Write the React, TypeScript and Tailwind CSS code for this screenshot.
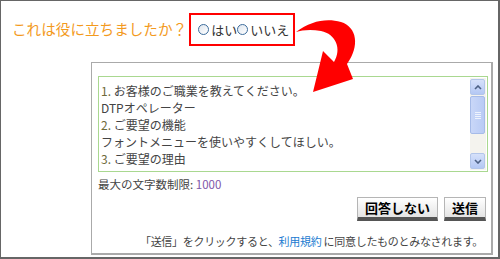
import React from "react";

const jp = { fontFamily: '"Noto Sans CJK JP", "Noto Sans", sans-serif' };

function Radio() {
  return (
    <span className="inline-block w-[11px] h-[11px] rounded-full border border-[#3c6c9c] bg-gradient-to-br from-[#dfe6ee] to-white shrink-0" />
  );
}

function Scrollbar() {
  return (
    <div className="w-[16px] h-full flex flex-col bg-[#f4f3ee] py-[1px] pr-[1px]">
      <div className="h-[16px] rounded-[2px] border border-[#b3c6ea] bg-gradient-to-b from-[#d6e1fa] to-[#b4c8f4] flex items-center justify-center">
        <svg width="8" height="5" viewBox="0 0 8 5"><path d="M1 4 L4 1 L7 4" stroke="#4d6185" strokeWidth="1.6" fill="none" /></svg>
      </div>
      <div className="mt-[1px] h-[38px] rounded-[2px] border border-[#a6bbe8] bg-gradient-to-r from-[#c9d7f8] to-[#b9cbf5] flex flex-col items-center justify-center gap-[1px]">
        <span className="block w-[6px] h-[1px] bg-[#eef3fd]" />
        <span className="block w-[6px] h-[1px] bg-[#eef3fd]" />
        <span className="block w-[6px] h-[1px] bg-[#eef3fd]" />
        <span className="block w-[6px] h-[1px] bg-[#eef3fd]" />
      </div>
      <div className="flex-1" />
      <div className="h-[16px] rounded-[2px] border border-[#b3c6ea] bg-gradient-to-b from-[#d6e1fa] to-[#b4c8f4] flex items-center justify-center">
        <svg width="8" height="5" viewBox="0 0 8 5"><path d="M1 1 L4 4 L7 1" stroke="#4d6185" strokeWidth="1.6" fill="none" /></svg>
      </div>
    </div>
  );
}

function Btn({ children }: { children: React.ReactNode }) {
  return (
    <div className="h-[24px] px-[7px] flex items-center border border-[#b5b5b5] border-b-[4px] border-b-[#555] bg-gradient-to-b from-white to-[#e4e4e4] text-[13px] font-bold text-black leading-none">
      {children}
    </div>
  );
}

export default function App() {
  return (
    <div className="relative w-[500px] h-[259px] bg-white border border-[#666] border-r-2 border-b-2 overflow-hidden" style={jp}>
      <div className="flex items-center pl-[11px] pt-[12px]">
        <span className="text-[14.6px] text-[#f39a1e] leading-none">これは役に立ちましたか？</span>
        <div className="ml-[2px] w-[106px] h-[33px] border-2 border-[#f00] flex items-center pl-[7px] text-[13px] text-[#333] leading-none">
          <Radio />
          <span className="ml-[2px]">はい</span>
          <Radio />
          <span className="ml-[2px]">いいえ</span>
        </div>
      </div>

      <div className="ml-[90px] mt-[16px] w-[402px] h-[193px] border border-[#aaa] border-b-2 border-r-2 pt-[13px] pl-[6px] pr-[4px]">
        <div className="w-[390px] h-[96px] border border-[#a9d890] flex">
          <div className="flex-1 pl-[2px] pt-[5px] text-[12px] leading-[17px] text-[#444]">
            <div><span className="text-[#6e6a3a]">1.</span> お客様のご職業を教えてください。</div>
            <div>DTPオペレーター</div>
            <div><span className="text-[#6e6a3a]">2.</span> ご要望の機能</div>
            <div>フォントメニューを使いやすくしてほしい。</div>
            <div><span className="text-[#6e6a3a]">3.</span> ご要望の理由</div>
          </div>
          <div className="py-[1px] pr-[1px] h-full"><Scrollbar /></div>
        </div>
        <div className="mt-[5px] text-[11.5px] leading-[14px] text-[#444]">
          最大の文字数制限: <span className="text-[#7d55a8]">1000</span>
        </div>
        <div className="mt-[6px] flex justify-end gap-[6px] pr-[1px]">
          <Btn>回答しない</Btn>
          <Btn>送信</Btn>
        </div>
        <div className="mt-[13px] pr-[4px] text-right text-[11px] leading-[14px] text-[#444] tracking-[-0.3px]">
          「送信」をクリックすると、<span className="text-[#1a7bd0]">利用規約</span> に同意したものとみなされます。
        </div>
      </div>

      <svg className="absolute left-0 top-0 pointer-events-none" width="500" height="259" viewBox="0 0 500 259">
        <path
          d="M 295 31 C 310 20 325 17 340 21 C 356 26 359 45 346 63 L 352 78 L 312 91 L 322 50 L 333 61 C 341 48 335 33 320 30 C 310 28 301 29 295 31 Z"
          fill="#f00"
        />
      </svg>
    </div>
  );
}
